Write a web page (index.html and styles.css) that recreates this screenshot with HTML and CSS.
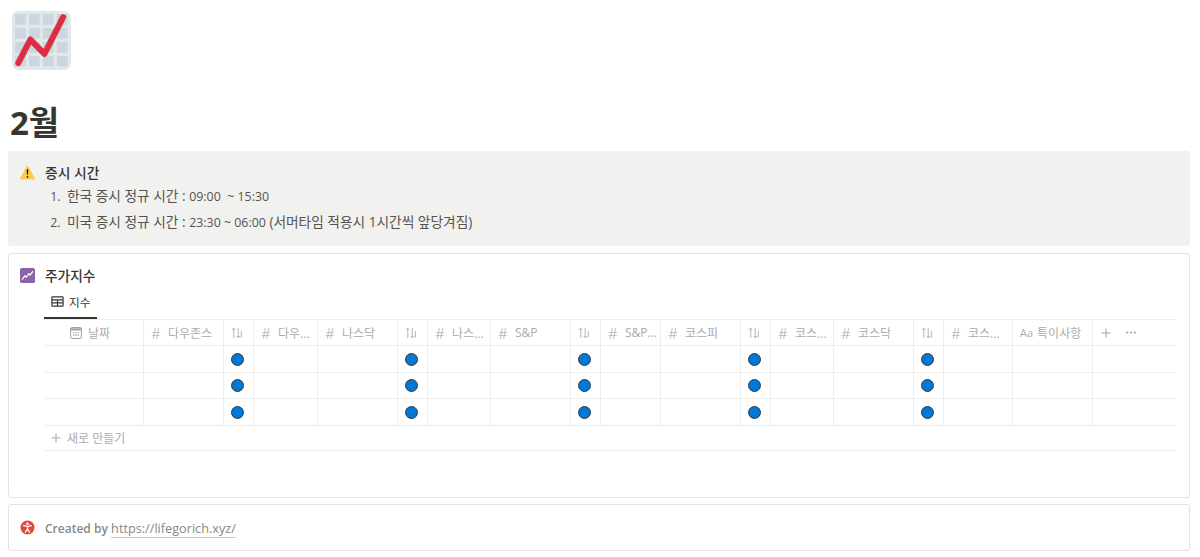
FILE: index.html
```html
<!DOCTYPE html>
<html lang="ko">
<head>
<meta charset="utf-8">
<title>2월</title>
<link rel="stylesheet" href="styles.css">
</head>
<body>
<main class="page">
  <svg class="page-icon" viewBox="0 0 36 36" aria-hidden="true">
    <path fill="#e1e8ed" d="M36 32a4 4 0 0 1-4 4H4a4 4 0 0 1-4-4V4a4 4 0 0 1 4-4h28a4 4 0 0 1 4 4z"/>
    <path fill="#ccd6dd" d="M1.9 1.9h6.5v6.5H1.9zM10.4 1.9h6.5v6.5h-6.5zM18.9 1.9h6.5v6.5h-6.5zM27.4 1.9h6.5v6.5h-6.5zM1.9 10.4h6.5v6.5H1.9zM10.4 10.4h6.5v6.5h-6.5zM18.9 10.4h6.5v6.5h-6.5zM27.4 10.4h6.5v6.5h-6.5zM1.9 18.9h6.5v6.5H1.9zM10.4 18.9h6.5v6.5h-6.5zM18.9 18.9h6.5v6.5h-6.5zM27.4 18.9h6.5v6.5h-6.5zM1.9 27.4h6.5v6.5H1.9zM10.4 27.4h6.5v6.5h-6.5zM18.9 27.4h6.5v6.5h-6.5zM27.4 27.4h6.5v6.5h-6.5z"/>
    <path fill="none" stroke="#dd2e44" stroke-width="3.7" stroke-linecap="round" stroke-linejoin="round" d="M3.8 31.8 L11.2 17.4 L19.8 26.2 L31.2 3.8"/>
  </svg>
  <h1 class="title">2월</h1>

  <section class="callout callout-gray">
    <span class="callout-emoji">
      <svg class="icon-16" viewBox="0 0 36 36" aria-hidden="true">
        <path fill="#ffcc4d" d="M2.65 35C.4 35-.6 33.4.5 31.5L15.8 3.2c1.1-2 3.2-2 4.4 0l15.3 28.3c1.1 1.9.1 3.5-2.15 3.5z"/>
        <path fill="#231f20" d="M15.8 28.5a2.2 2.2 0 1 1 4.4 0 2.2 2.2 0 0 1-4.4 0zM16 11.5c0-1.3 1-2 2-2s2 .7 2 2l-.7 10.5c-.1 1-.6 1.5-1.3 1.5s-1.2-.5-1.3-1.5z"/>
      </svg>
    </span>
    <div class="callout-body">
      <p class="callout-title">증시 시간</p>
      <ol class="time-list">
        <li>한국 증시 정규 시간 : <span class="lat">09:00&nbsp; ~ 15:30</span></li>
        <li>미국 증시 정규 시간 : <span class="lat">23:30 ~ 06:00</span> (서머타임 적용시 1시간씩 앞당겨짐)</li>
      </ol>
    </div>
  </section>

  <section class="callout callout-line callout-db">
    <span class="callout-emoji">
      <svg class="icon-16" viewBox="0 0 16 16" aria-hidden="true">
        <rect width="16" height="16" rx="2" fill="#8d62aa"/>
        <path fill="none" stroke="#fff" stroke-width="1.3" stroke-linejoin="round" stroke-linecap="round" d="M2.5 12 L5.2 8.2 L6.6 10 L9.5 6 L10.8 7.6 L13.5 3.8"/>
      </svg>
    </span>
    <div class="db">
      <p class="db-title">주가지수</p>
      <div class="tabs">
        <div class="tab">
          <svg class="icon-tab" viewBox="0 0 14 12" aria-hidden="true">
            <path fill="none" stroke="#37352f" stroke-width="1.3" d="M1.6.9h10.8c.4 0 .7.3.7.7v8.8c0 .4-.3.7-.7.7H1.6c-.4 0-.7-.3-.7-.7V1.6c0-.4.3-.7.7-.7zM1 4.2h12M1 7.6h12M7 4.2v7"/>
          </svg>
          <span>지수</span>
        </div>
      </div>
      <div class="table">
        <div class="row head">
          <div class="cell w100 date-head">
            <svg class="icon-cal" viewBox="0 0 14 14" aria-hidden="true">
              <rect x=".7" y=".7" width="12.6" height="12.6" rx="2" fill="none" stroke="#a5a4a1" stroke-width="1.2"/>
              <path fill="#a5a4a1" d="M1 1.5h12v2.5H1zM3.5 6h1.6v1.4H3.5zM6.2 6h1.6v1.4H6.2zM8.9 6h1.6v1.4H8.9zM3.5 8.8h1.6v1.4H3.5zM6.2 8.8h1.6v1.4H6.2zM8.9 8.8h1.6v1.4H8.9z"/>
            </svg>
            <span>날짜</span>
          </div>
          <div class="cell w80"><span class="hash">#</span><span class="name">다우존스</span></div>
          <div class="cell w30 arrows"><svg class="icon-arrows" viewBox="0 0 12 12" aria-hidden="true"><path d="M2.8 11V1.2M.9 3l1.9-1.8M2.8 1.2L4.2 2.6M7.2 1v9.8M5.7 9l1.5 1.8L9 9M10.3 4v6.8"/></svg></div>
          <div class="cell w64"><span class="hash">#</span><span class="name">다우...</span></div>
          <div class="cell w80"><span class="hash">#</span><span class="name">나스닥</span></div>
          <div class="cell w30 arrows"><svg class="icon-arrows" viewBox="0 0 12 12" aria-hidden="true"><path d="M2.8 11V1.2M.9 3l1.9-1.8M2.8 1.2L4.2 2.6M7.2 1v9.8M5.7 9l1.5 1.8L9 9M10.3 4v6.8"/></svg></div>
          <div class="cell w63"><span class="hash">#</span><span class="name">나스...</span></div>
          <div class="cell w80"><span class="hash">#</span><span class="name">S&amp;P</span></div>
          <div class="cell w30 arrows"><svg class="icon-arrows" viewBox="0 0 12 12" aria-hidden="true"><path d="M2.8 11V1.2M.9 3l1.9-1.8M2.8 1.2L4.2 2.6M7.2 1v9.8M5.7 9l1.5 1.8L9 9M10.3 4v6.8"/></svg></div>
          <div class="cell w60"><span class="hash">#</span><span class="name">S&amp;P...</span></div>
          <div class="cell w80"><span class="hash">#</span><span class="name">코스피</span></div>
          <div class="cell w30 arrows"><svg class="icon-arrows" viewBox="0 0 12 12" aria-hidden="true"><path d="M2.8 11V1.2M.9 3l1.9-1.8M2.8 1.2L4.2 2.6M7.2 1v9.8M5.7 9l1.5 1.8L9 9M10.3 4v6.8"/></svg></div>
          <div class="cell w63"><span class="hash">#</span><span class="name">코스...</span></div>
          <div class="cell w80"><span class="hash">#</span><span class="name">코스닥</span></div>
          <div class="cell w30 arrows"><svg class="icon-arrows" viewBox="0 0 12 12" aria-hidden="true"><path d="M2.8 11V1.2M.9 3l1.9-1.8M2.8 1.2L4.2 2.6M7.2 1v9.8M5.7 9l1.5 1.8L9 9M10.3 4v6.8"/></svg></div>
          <div class="cell w69"><span class="hash">#</span><span class="name">코스...</span></div>
          <div class="cell w80"><span class="aa">Aa</span><span class="name">특이사항</span></div>
          <div class="cell grow tools">
            <svg class="icon-plus" viewBox="0 0 10 10" aria-hidden="true"><path d="M5 .5v9M.5 5h9"/></svg>
            <svg class="icon-dots" viewBox="0 0 10 3" aria-hidden="true"><circle cx="1.2" cy="1.5" r="1.1"/><circle cx="5" cy="1.5" r="1.1"/><circle cx="8.8" cy="1.5" r="1.1"/></svg>
          </div>
        </div>
        <div class="row">
          <div class="cell w100"></div><div class="cell w80"></div><div class="cell w30 dotcell"><i class="dot"></i></div><div class="cell w64"></div><div class="cell w80"></div><div class="cell w30 dotcell"><i class="dot"></i></div><div class="cell w63"></div><div class="cell w80"></div><div class="cell w30 dotcell"><i class="dot"></i></div><div class="cell w60"></div><div class="cell w80"></div><div class="cell w30 dotcell"><i class="dot"></i></div><div class="cell w63"></div><div class="cell w80"></div><div class="cell w30 dotcell"><i class="dot"></i></div><div class="cell w69"></div><div class="cell w80"></div><div class="cell grow"></div>
        </div>
        <div class="row">
          <div class="cell w100"></div><div class="cell w80"></div><div class="cell w30 dotcell"><i class="dot"></i></div><div class="cell w64"></div><div class="cell w80"></div><div class="cell w30 dotcell"><i class="dot"></i></div><div class="cell w63"></div><div class="cell w80"></div><div class="cell w30 dotcell"><i class="dot"></i></div><div class="cell w60"></div><div class="cell w80"></div><div class="cell w30 dotcell"><i class="dot"></i></div><div class="cell w63"></div><div class="cell w80"></div><div class="cell w30 dotcell"><i class="dot"></i></div><div class="cell w69"></div><div class="cell w80"></div><div class="cell grow"></div>
        </div>
        <div class="row">
          <div class="cell w100"></div><div class="cell w80"></div><div class="cell w30 dotcell"><i class="dot"></i></div><div class="cell w64"></div><div class="cell w80"></div><div class="cell w30 dotcell"><i class="dot"></i></div><div class="cell w63"></div><div class="cell w80"></div><div class="cell w30 dotcell"><i class="dot"></i></div><div class="cell w60"></div><div class="cell w80"></div><div class="cell w30 dotcell"><i class="dot"></i></div><div class="cell w63"></div><div class="cell w80"></div><div class="cell w30 dotcell"><i class="dot"></i></div><div class="cell w69"></div><div class="cell w80"></div><div class="cell grow"></div>
        </div>
        <div class="new-row">
          <svg class="icon-plus" viewBox="0 0 10 10" aria-hidden="true"><path d="M5 .5v9M.5 5h9"/></svg>
          <span>새로 만들기</span>
        </div>
      </div>
    </div>
  </section>

  <section class="callout callout-line callout-foot">
    <span class="callout-emoji">
      <svg class="icon-16" viewBox="0 0 16 16" aria-hidden="true">
        <circle cx="8" cy="8" r="7.5" fill="#dd4a40"/>
        <circle cx="8" cy="3.9" r="1.35" fill="#fff"/>
        <path fill="none" stroke="#fff" stroke-width="1.3" stroke-linecap="round" stroke-linejoin="round" d="M3.8 6.1 L8 6.9 L12.2 6.1 M8 6.9 V9.4 M5.8 13 L8 9.4 L10.2 13"/>
      </svg>
    </span>
    <p class="foot-text"><strong>Created by</strong> <a class="foot-link" href="#">https://lifegorich.xyz/</a></p>
  </section>
</main>
</body>
</html>
```

FILE: styles.css
```css
* { box-sizing: border-box; }

html, body {
  margin: 0;
  padding: 0;
  background: #fff;
  overflow: hidden;
}

body {
  font-family: "Open Sans", "Noto Sans CJK KR", sans-serif;
  color: #37352f;
  font-size: 13px;
}

.page {
  width: 1200px;
  height: 557px;
  padding: 11px 10px 0 8px;
}

.page-icon {
  display: block;
  width: 59px;
  height: 59px;
  margin-left: 4px;
}

.title {
  margin: 29px 0 0 2px;
  height: 52px;
  font-family: "Open Sans", "Noto Sans CJK KR", sans-serif;
  font-size: 33px;
  font-weight: 700;
  line-height: 48px;
  color: #37352f;
}

.callout {
  display: flex;
  border-radius: 3px;
  padding-left: 12px;
}

.callout-gray {
  height: 95px;
  background: #f1f1ef;
  padding-top: 14px;
}

.callout-line {
  border: 1px solid #e3e2e0;
  padding-left: 11px;
}

.callout-db {
  height: 245px;
  margin-top: 7px;
  padding-top: 13px;
  padding-right: 13px;
}

.callout-foot {
  height: 47px;
  margin-top: 6px;
  padding-top: 15px;
}

.callout-emoji {
  flex: none;
  width: 25px;
  height: 16px;
  padding-top: 1px;
}

.callout-gray .callout-emoji,
.callout-foot .callout-emoji {
  padding-top: 0;
}

.icon-16 {
  display: block;
  width: 15px;
  height: 15px;
}

.callout-body {
  flex: 1;
}

.callout-title {
  margin: 0;
  font-size: 13.8px;
  line-height: 16px;
  font-weight: 500;
  color: #37352f;
}

.time-list {
  margin: 5px 0 0;
  padding: 0 0 0 22px;
  color: #55534e;
  font-size: 13.7px;
}

.time-list li {
  height: 26px;
  line-height: 19px;
}

.time-list li::marker {
  content: counter(list-item) ".\00a0\00a0";
  font-size: 12.4px;
}

.lat {
  font-size: 12.4px;
}

.db {
  flex: 1;
  min-width: 0;
}

.db-title {
  margin: 0;
  font-size: 13.7px;
  line-height: 17px;
  font-weight: 500;
  color: #37352f;
}

.tabs {
  height: 35px;
  display: flex;
  margin-left: -1px;
}

.tab {
  width: 53px;
  height: 34px;
  margin-top: 1px;
  border-bottom: 2px solid #37352f;
  display: flex;
  align-items: center;
  padding-left: 7px;
  gap: 5px;
  font-size: 11.7px;
  color: #37352f;
}

.icon-tab {
  width: 13px;
  height: 11px;
}

.table {
  margin-left: -1px;
  border-top: 1px solid #ededec;
}

.row {
  display: flex;
  height: 26.6px;
  border-bottom: 1px solid #ededec;
}

.row.head {
  height: 26px;
}

.cell {
  flex: none;
  height: 100%;
  border-right: 1px solid #ededec;
  display: flex;
  align-items: center;
  padding-left: 7px;
  color: #acaba8;
  font-size: 12px;
  white-space: nowrap;
  overflow: hidden;
}

.w100 { width: 100px; }
.w80 { width: 80px; }
.w30 { width: 30px; }
.w64 { width: 64px; }
.w63 { width: 63px; }
.w60 { width: 60px; }
.w69 { width: 69px; }

.grow {
  flex: 1;
  border-right: 0;
}

.date-head {
  padding-left: 26px;
  gap: 6px;
}

.icon-cal {
  width: 12px;
  height: 12px;
}

.hash {
  width: 10px;
  margin-right: 7px;
  font-size: 15px;
  font-weight: 300;
  color: #a5a4a1;
}

.aa {
  margin-right: 4px;
  font-size: 11px;
}

.icon-arrows {
  width: 12px;
  height: 12px;
  fill: none;
  stroke: #b5b4b1;
  stroke-width: 1;
}

.tools {
  padding-left: 8px;
  gap: 15px;
}

.icon-dots {
  width: 10px;
  height: 3px;
  fill: #a5a4a1;
}

.dot {
  display: block;
  width: 13px;
  height: 13px;
  margin-top: 1px;
  border-radius: 50%;
  background: #0078d7;
  border: 1px solid #3a3a3a;
}

.new-row {
  height: 25px;
  display: flex;
  align-items: center;
  gap: 6px;
  padding-left: 7px;
  border-bottom: 1px solid #ededec;
  color: #acaba8;
  font-size: 12px;
}

.icon-plus {
  flex: none;
  width: 10px;
  height: 10px;
  fill: none;
  stroke: #a5a4a1;
  stroke-width: 1;
}

.foot-text {
  margin: 0;
  font-size: 12.7px;
  line-height: 16px;
  color: #8a8883;
}

.foot-text strong {
  font-size: 12px;
  font-weight: 600;
}

.foot-link {
  color: #8a8883;
  text-decoration: none;
  border-bottom: 1px solid #c9c8c5;
  font-weight: 500;
}
```
